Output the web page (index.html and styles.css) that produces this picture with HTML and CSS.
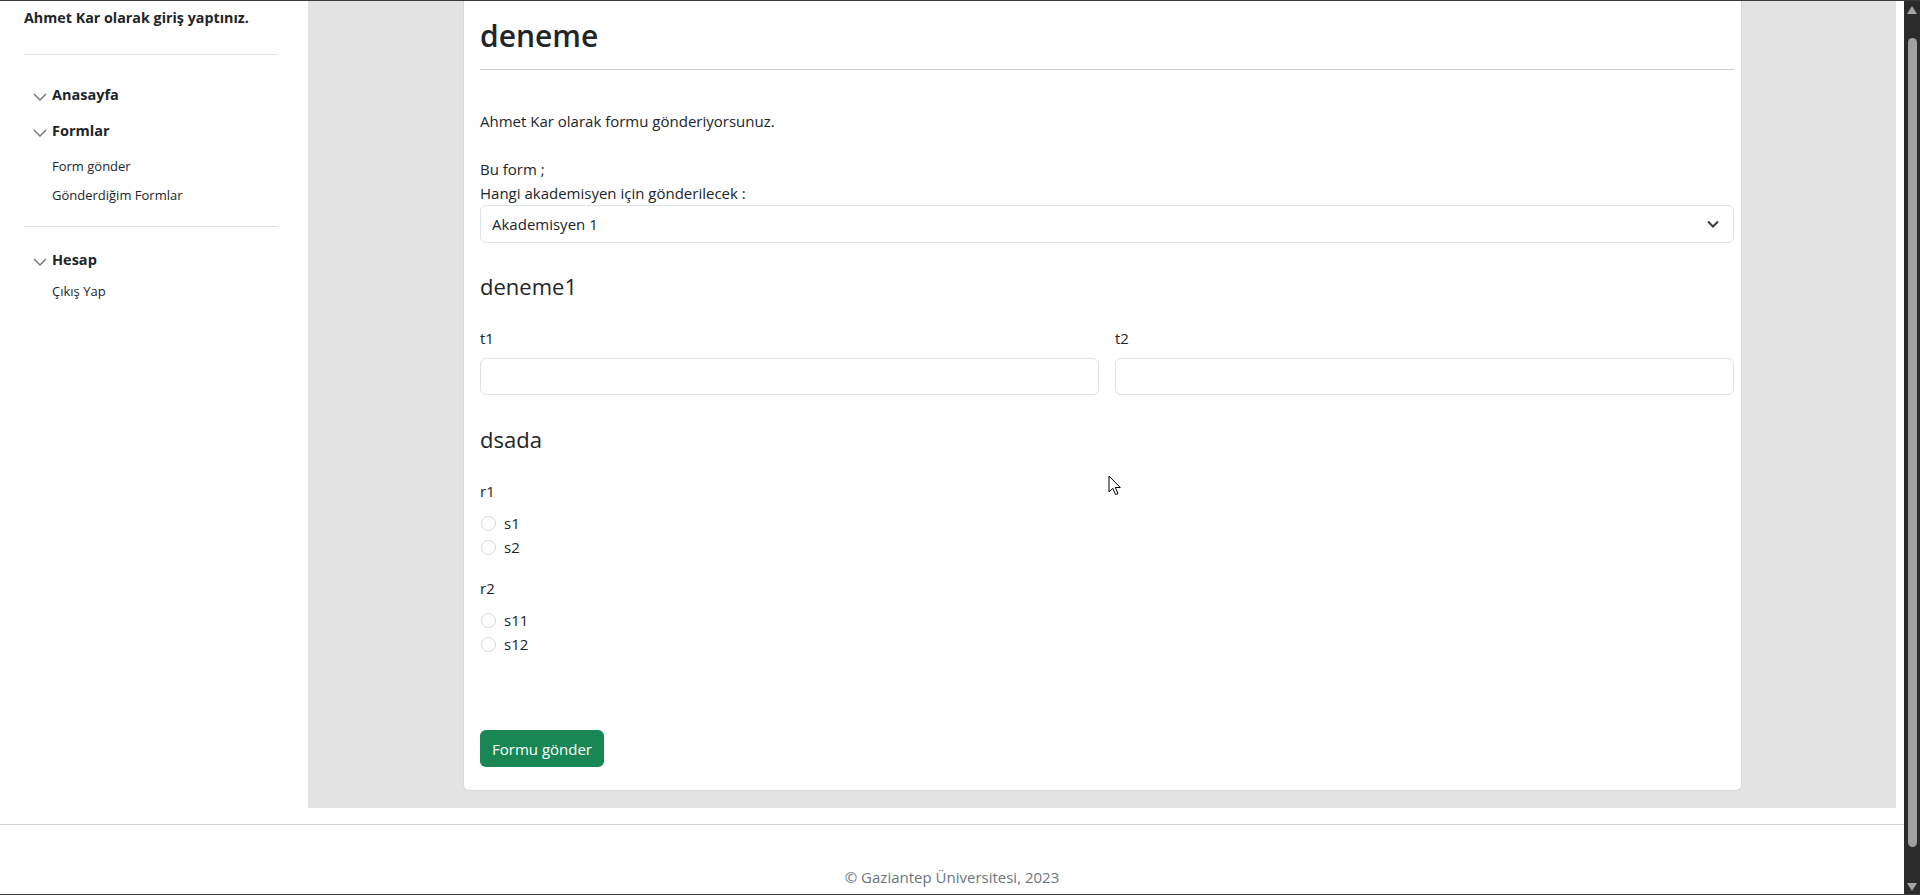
FILE: index.html
```html
<!DOCTYPE html>
<html lang="tr">
<head>
<meta charset="utf-8">
<title>Form gönder</title>
<link rel="stylesheet" href="styles.css">
</head>
<body>
<div class="window">
  <div class="page">
    <div class="main">
      <aside class="sidebar">
        <div class="who">Ahmet Kar olarak giriş yaptınız.</div>
        <hr class="side-rule">
        <nav class="nav">
          <div class="nav-section">
            <div class="nav-title"><svg class="chev" width="14" height="8" viewBox="0 0 14 8"><path d="M1 1 L7 7 L13 1" /></svg>Anasayfa</div>
          </div>
          <div class="nav-section">
            <div class="nav-title"><svg class="chev" width="14" height="8" viewBox="0 0 14 8"><path d="M1 1 L7 7 L13 1" /></svg>Formlar</div>
            <ul class="nav-sub">
              <li>Form gönder</li>
              <li>Gönderdiğim Formlar</li>
            </ul>
          </div>
        </nav>
        <hr class="side-rule mid">
        <nav class="nav account">
          <div class="nav-section">
            <div class="nav-title"><svg class="chev" width="14" height="8" viewBox="0 0 14 8"><path d="M1 1 L7 7 L13 1" /></svg>Hesap</div>
            <ul class="nav-sub tight">
              <li>Çıkış Yap</li>
            </ul>
          </div>
        </nav>
      </aside>
      <section class="content">
        <form class="card">
          <h2 class="title">deneme</h2>
          <hr class="title-rule">
          <p class="lead-text">Ahmet Kar olarak formu gönderiyorsunuz.</p>
          <div class="target">
            <div>Bu form ;</div>
            <label for="akademisyen">Hangi akademisyen için gönderilecek :</label>
          </div>
          <div class="select-wrap">
            <select id="akademisyen" class="select">
              <option>Akademisyen 1</option>
            </select>
            <svg class="select-chev" width="12" height="8" viewBox="0 0 12 8"><path d="M1 1.5 L6 6.5 L11 1.5" /></svg>
          </div>

          <h4 class="section-title">deneme1</h4>
          <div class="field-row">
            <div class="field">
              <label for="t1">t1</label>
              <input id="t1" type="text">
            </div>
            <div class="field">
              <label for="t2">t2</label>
              <input id="t2" type="text">
            </div>
          </div>

          <h4 class="section-title second">dsada</h4>
          <div class="radio-group">
            <div class="group-label">r1</div>
            <div class="radio-list">
              <label class="radio-row"><input type="radio" name="r1">s1</label>
              <label class="radio-row"><input type="radio" name="r1">s2</label>
            </div>
          </div>
          <div class="radio-group">
            <div class="group-label">r2</div>
            <div class="radio-list">
              <label class="radio-row"><input type="radio" name="r2">s11</label>
              <label class="radio-row"><input type="radio" name="r2">s12</label>
            </div>
          </div>

          <div class="actions">
            <button type="button" class="submit">Formu gönder</button>
          </div>
        </form>
      </section>
    </div>
    <footer class="footer">© Gaziantep Üniversitesi, 2023</footer>
  </div>
  <div class="scrollbar">
    <svg class="sb-arrow" width="10" height="8" viewBox="0 0 10 8"><path d="M5 0 L10 8 L0 8 Z" /></svg>
    <div class="sb-thumb"></div>
    <svg class="sb-arrow down" width="10" height="8" viewBox="0 0 10 8"><path d="M0 0 L10 0 L5 8 Z" /></svg>
  </div>
  <svg class="cursor" width="14" height="21" viewBox="0 0 14 21"><path d="M1 1 L1 17 L4.8 13.4 L7.6 19.6 L10 18.6 L7.3 12.5 L12.3 12.5 Z" /></svg>
</div>
</body>
</html>
```
FILE: styles.css
```css
html, body {
  margin: 0;
  padding: 0;
}

body {
  font-family: "Open Sans", "Noto Sans", sans-serif;
  color: #212529;
  background: #ffffff;
}

.window {
  position: relative;
  display: flex;
  height: 895px;
  box-sizing: border-box;
  border-top: 1px solid #3b3b3b;
  border-bottom: 1px solid #3b3b3b;
  overflow: hidden;
}

.page {
  flex: 1;
  min-width: 0;
  display: flex;
  flex-direction: column;
}

.main {
  display: flex;
}

/* Sidebar */
.sidebar {
  flex: none;
  width: 308px;
  box-sizing: border-box;
  padding: 6px 30px 0 24px;
}

.who {
  font-size: 14.3px;
  font-weight: 700;
  line-height: 22px;
}

.side-rule {
  border: 0;
  border-top: 1px solid #dee2e6;
  margin: 25px 0 0;
}

.side-rule.mid {
  margin-top: 16px;
}

.nav {
  margin-top: 29px;
}

.nav.account {
  margin-top: 22px;
}

.nav-section + .nav-section {
  margin-top: 14px;
}

.nav-title {
  display: flex;
  align-items: center;
  gap: 5px;
  padding-left: 9px;
  font-size: 14.5px;
  font-weight: 700;
  line-height: 22px;
}

.chev {
  margin-top: 3px;
}

.chev path {
  fill: none;
  stroke: #7a7a7a;
  stroke-width: 1.5;
}

.nav-sub {
  list-style: none;
  margin: 10px 0 0;
  padding: 0 0 0 28px;
  font-size: 13px;
  line-height: 29px;
}

.nav-sub.tight {
  margin-top: 6px;
}

/* Content */
.content {
  flex: 1;
  background: #e3e3e3;
  margin-right: 8px;
  padding: 0 154px 17px 155px;
}

.card {
  display: block;
  margin: 0;
  background: #ffffff;
  border: 1px solid #d9d9d9;
  border-top: 0;
  border-radius: 0 0 6px 6px;
  padding: 17px 7px 23px 16px;
}

.title {
  margin: 0;
  font-size: 30px;
  font-weight: 600;
  line-height: 36px;
}

.title-rule {
  border: 0;
  border-top: 1px solid #cccccc;
  margin: 15px 0 0;
}

.lead-text {
  margin: 39px 0 0;
  font-size: 15px;
  line-height: 24px;
}

.target {
  margin-top: 24px;
  font-size: 15px;
  line-height: 24px;
}

.target label {
  display: block;
}

.select-wrap {
  position: relative;
}

.select {
  display: block;
  width: 100%;
  height: 38px;
  box-sizing: border-box;
  appearance: none;
  -webkit-appearance: none;
  border: 1px solid #dee2e6;
  border-radius: 6px;
  background: #ffffff;
  padding: 0 36px 0 11px;
  font-family: inherit;
  font-size: 15px;
  color: #212529;
}

.select-chev {
  position: absolute;
  right: 15px;
  top: 15px;
}

.select-chev path {
  fill: none;
  stroke: #343a40;
  stroke-width: 2;
}

.section-title {
  margin: 30px 0 0;
  font-size: 22px;
  font-weight: 400;
  line-height: 26px;
}

.section-title.second {
  margin-top: 31px;
}

.field-row {
  display: grid;
  grid-template-columns: 1fr 1fr;
  gap: 16px;
  margin-top: 27px;
}

.field label {
  display: block;
  font-size: 15px;
  line-height: 24px;
}

.field input {
  display: block;
  width: 100%;
  height: 37px;
  margin-top: 8px;
  box-sizing: border-box;
  border: 1px solid #dee2e6;
  border-radius: 6px;
  background: #ffffff;
  font-family: inherit;
  font-size: 15px;
}

.radio-group {
  margin-top: 27px;
}

.radio-group + .radio-group {
  margin-top: 17px;
}

.group-label {
  font-size: 15px;
  line-height: 24px;
}

.radio-list {
  margin-top: 8px;
}

.radio-row {
  display: flex;
  align-items: center;
  gap: 8px;
  height: 24px;
  font-size: 15px;
}

.radio-row input {
  appearance: none;
  -webkit-appearance: none;
  width: 15px;
  height: 15px;
  margin: 0 0 0 1px;
  border: 1px solid #d3d7db;
  border-radius: 50%;
  background: #ffffff;
}

.actions {
  margin-top: 74px;
}

.submit {
  display: block;
  height: 37px;
  padding: 0 12px;
  border: 0;
  border-radius: 6px;
  background: #198754;
  color: #ffffff;
  font-family: inherit;
  font-size: 15px;
}

/* Footer */
.footer {
  margin-top: 16px;
  border-top: 1px solid #cfcfcf;
  padding-top: 40px;
  text-align: center;
  font-size: 15px;
  line-height: 24px;
  color: #6c757d;
}

/* Scrollbar */
.scrollbar {
  flex: none;
  width: 16px;
  background: #2b2b2b;
  display: flex;
  flex-direction: column;
  align-items: center;
  padding-top: 5px;
  box-sizing: border-box;
}

.sb-arrow path {
  fill: #a3a3a3;
}

.sb-thumb {
  width: 9px;
  height: 809px;
  margin-top: 24px;
  border-radius: 5px;
  background: #9f9f9f;
}

.sb-arrow.down {
  margin-top: 36px;
}

.cursor {
  position: absolute;
  left: 1108px;
  top: 474px;
}

.cursor path {
  fill: #ffffff;
  stroke: #000000;
  stroke-width: 1;
}
```
